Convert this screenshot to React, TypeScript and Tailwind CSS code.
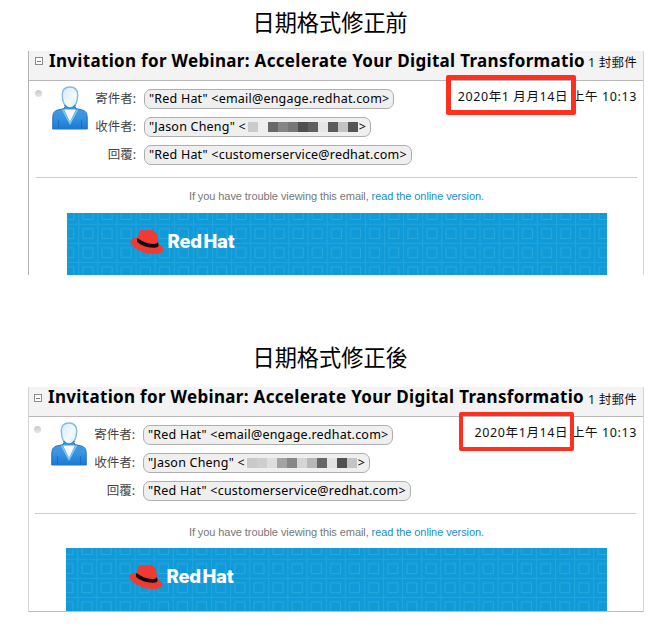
import React from "react";

const LUCIDA = "font-['Noto_Sans','Noto_Sans_CJK_TC',sans-serif]";

function Avatar({ id }: { id: string }) {
  return (
    <svg width="36" height="44" viewBox="0 0 36 44" className="block">
      <defs>
        <linearGradient id={`${id}-body`} x1="0" y1="0" x2="0" y2="1">
          <stop offset="0" stopColor="#4a9be0" />
          <stop offset="0.5" stopColor="#3493e2" />
          <stop offset="1" stopColor="#1c78d2" />
        </linearGradient>
        <linearGradient id={`${id}-head`} x1="0" y1="0" x2="1" y2="1">
          <stop offset="0" stopColor="#d5ebfa" />
          <stop offset="0.6" stopColor="#f2faff" />
          <stop offset="1" stopColor="#d2eafa" />
        </linearGradient>
      </defs>
      <path d="M12.5 21 L12.5 22.5 L5 24.2 Q1 25.5 0.8 31 L0.7 43 H35.3 L35.2 31 Q35 25.5 31 24.2 L23.5 22.5 L23.5 21Z" fill={`url(#${id}-body)`} stroke="#2474c4" />
      <path d="M12 23.5 L18 36 L24 23.5 Z" fill="#f5f9fd" />
      <path d="M10.5 23.5 L18 37.5 L25.5 23.5" fill="none" stroke="#84c7f2" strokeWidth="1.5" />
      <path d="M6.5 34 V42.5 M29.5 34 V42.5" stroke="#1b68bd" strokeWidth="0.8" />
      <path d="M18 1 C13 1 10.3 4.2 10.3 9 C10.3 15 12.3 22 18 22 C23.7 22 25.7 15 25.7 9 C25.7 4.2 23 1 18 1Z" fill={`url(#${id}-head)`} stroke="#82bbe9" strokeWidth="1.4" />
      <path d="M12.5 19 Q18 25.5 23.5 19" fill="none" stroke="#2e86d2" strokeWidth="1.3" />
    </svg>
  );
}

function Hat() {
  return (
    <svg width="34" height="26" viewBox="0 0 34 26" className="block">
      <path d="M7.7 8.8 L9.8 2.1 Q10.7 0.2 13 1 Q15.5 2 17 1 Q22 0.2 25 2.4 Q26.3 3.4 26.8 5.8 L28.6 15 Q33.8 17.8 33.3 21 Q31.5 25.6 22 25 Q11 24 3.8 17.7 Q-0.4 13.8 0.7 11.4 Q2.2 8.7 7.7 8.8Z" fill="#f33a32" />
      <path d="M7.6 8.9 Q14 14.4 23.5 15 Q27 15.2 28 13.2 L28.7 16.8 Q27.6 19.2 23.5 18.8 Q12.5 18 7.2 12.9 Q6.2 11.8 7.6 8.9Z" fill="#090c10" />
    </svg>
  );
}

function Banner({ id, className }: { id: string; className: string }) {
  return (
    <div className={`relative overflow-hidden bg-[#109ad8] ${className}`}>
      <svg width="100%" height="100%" className="absolute inset-0">
        <defs>
          <pattern id={`${id}-tile`} x="11.2" y="10.8" width="19.11" height="19.11" patternUnits="userSpaceOnUse">
            <path d="M0.5 0 V19.2 M0 0.5 H19.2" stroke="#22a5dd" strokeWidth="1" />
            <rect x="4.8" y="4.8" width="10" height="10" fill="none" stroke="#29a8dc" strokeWidth="1" />
          </pattern>
        </defs>
        <rect width="100%" height="100%" fill={`url(#${id}-tile)`} />
      </svg>
      <div className="relative flex pl-[63px] pt-4">
        <Hat />
        <span className="ml-[3.5px] mt-[2px] whitespace-nowrap font-['Inter',sans-serif] text-[18.5px] font-extrabold leading-[21px] tracking-[-0.15px] text-white [word-spacing:-2.5px]">
          Red Hat
        </span>
      </div>
    </div>
  );
}

function Field({ label, children }: { label: string; children: React.ReactNode }) {
  return (
    <div className="flex h-5 items-center">
      <span className="w-[49px] whitespace-nowrap text-right text-[12.5px] leading-5 text-[#444]">{label}</span>
      <div className="ml-[8px] flex h-5 items-center whitespace-nowrap rounded-[7px] border border-[#aeaeae] bg-[#efefef] pl-1 pr-[4px] text-[12.5px] leading-[18px] tracking-[0.21px] text-black">
        {children}
      </div>
    </div>
  );
}

function Redacted({ cells }: { cells: string[] }) {
  return (
    <span className="ml-[2px] mr-[1px] flex h-[10px]">
      {cells.map((c, i) => (
        <span key={i} className="h-full w-[10px]" style={{ background: c }} />
      ))}
    </span>
  );
}

interface MailProps {
  id: string;
  cells: string[];
  date: string;
  fixed?: boolean;
}

function Mail({ id, cells, date, fixed = false }: MailProps) {
  return (
    <section
      className={`relative ml-7 w-[616px] border-l border-r border-r-[#d5d5d5] bg-white ${LUCIDA} ${
        fixed ? "h-[225px] border-b border-b-[#bdbdbd] border-l-[#d5d5d5]" : "h-[224px] border-l-[#b4b4b4]"
      }`}
    >
      <header className={`flex h-[30px] border-b border-[#b9b9b9] bg-[#f3f3f3] ${fixed ? "pl-[5px]" : "pl-[6px]"}`}>
        <span className={`flex h-2 w-2 shrink-0 items-center justify-center border border-[#8c8c8c] bg-white ${fixed ? "mt-[7px]" : "mt-[6px]"}`}>
          <span className="h-px w-1 bg-[#777]" />
        </span>
        <h2 className="ml-[6px] w-[536px] shrink-0 whitespace-nowrap text-[17px] font-bold leading-[19px] tracking-[0.32px] text-black">
          Invitation for Webinar: Accelerate Your Digital Transformatio
        </h2>
        <span className={`whitespace-nowrap text-[12.5px] tracking-[0.2px] text-[#111] ${fixed ? "ml-[4px] leading-[25px]" : "ml-[3px] leading-[23px]"}`}>
          1 封郵件
        </span>
      </header>

      <div className={`flex h-[97px] border-b border-[#cccccc] ${fixed ? "ml-[6px] mr-[7px]" : "ml-[7px] mr-[6px]"}`}>
        <span className="ml-[-1px] mt-[9px] h-[7px] w-[7px] shrink-0 rounded-full bg-gradient-to-b from-[#c9c9c9] to-[#e5e5e5]" />
        <div className="ml-[9.5px] mt-[5px] shrink-0">
          <Avatar id={id} />
        </div>
        <div className="ml-[-0.5px] mt-[8px] flex shrink-0 flex-col gap-2">
          <Field label="寄件者:">"Red Hat" &lt;email@engage.redhat.com&gt;</Field>
          <Field label="收件者:">
            "Jason Cheng" &lt;
            <Redacted cells={cells} />
            &gt;
          </Field>
          <Field label="回覆:">"Red Hat" &lt;customerservice@redhat.com&gt;</Field>
        </div>
        <span className={`ml-auto mt-[6px] h-5 whitespace-nowrap text-[12.5px] leading-5 tracking-[0.6px] text-[#111] ${fixed ? "mr-[-1px]" : ""}`}>
          {date} 上午 10:13
        </span>
      </div>

      <p className="mt-[11px] pl-[1px] text-center font-['Liberation_Sans',Arial,sans-serif] text-[11px] leading-[14px] tracking-[-0.08px] text-[#777]">
        If you have trouble viewing this email, <a className="text-[#168fc9]">read the online version</a>.
      </p>
      <Banner id={id} className={fixed ? "ml-[37px] mt-[9px] h-[63px] w-[541px]" : "ml-[38px] mt-[10px] h-[62px] w-[540px]"} />
      <div
        className={
          fixed
            ? "absolute left-[430px] top-[25px] h-[39px] w-[115px] rounded-[2px] border-[4px] border-[#ff3020]"
            : "absolute left-[417px] top-[24px] h-[40px] w-[130px] rounded-[2px] border-[5px] border-[#ff3020]"
        }
      />
    </section>
  );
}

function Title({ children }: { children: React.ReactNode }) {
  return (
    <h1 className="pl-[252.5px] font-['Noto_Sans_CJK_TC',sans-serif] text-[22.2px] font-normal leading-[32px] text-black">
      {children}
    </h1>
  );
}

export default function App() {
  return (
    <main className="h-[626px] w-[672px] overflow-hidden bg-white">
      <div className="h-[51px] pt-[5px]">
        <Title>日期格式修正前</Title>
      </div>
      <Mail
        id="before"
        date="2020年1 月月14日"
        cells={["#cbcbcb", "#efefef", "#686868", "#858585", "#777777", "#4f4f4f", "#606060", "#e6e6e6", "#5b5b5b", "#c3c3c3", "#555555"]}
      />
      <div className="h-[112px] pt-[65px]">
        <Title>日期格式修正後</Title>
      </div>
      <Mail
        id="after"
        fixed
        date="2020年1月14日"
        cells={["#c9c9c9", "#cecece", "#dedede", "#a3a3a3", "#878787", "#d5d5d5", "#b8b8b8", "#666666", "#e2e2e2", "#505050", "#c4c4c4"]}
      />
    </main>
  );
}
